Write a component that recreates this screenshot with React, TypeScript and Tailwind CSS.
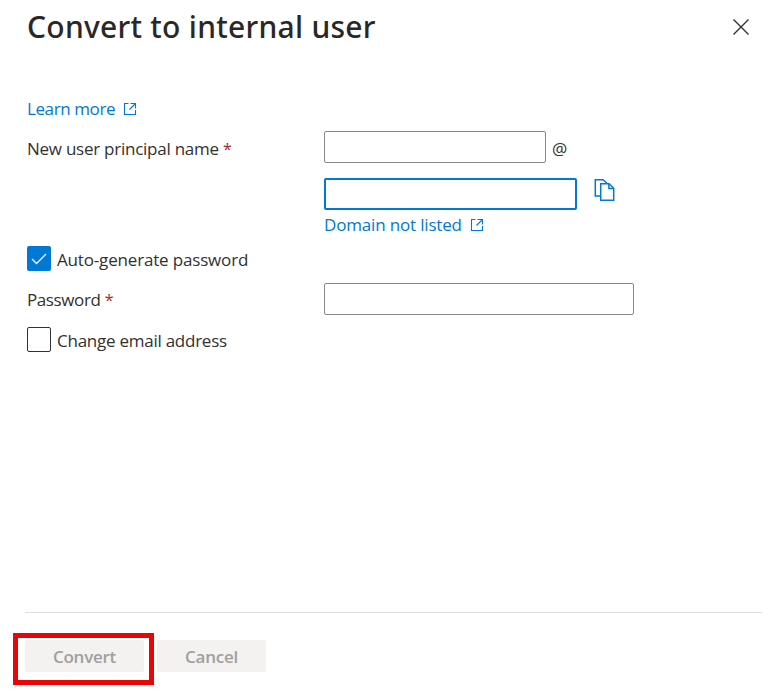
import React from 'react';

const OpenIcon = () => (
  <svg className="h-[14px] w-[14px] shrink-0" viewBox="0 0 14 14" fill="none" stroke="#0078d4" strokeWidth="1.1">
    <path d="M5.5 1.5H1.5V12.5H12.5V8M7.5 1.5H12.5V6.5M12.5 1.5L6.5 7.5" />
  </svg>
);

const CopyIcon = () => (
  <svg className="h-[24px] w-[22px]" viewBox="0 0 22 24" fill="none" stroke="#0078d4" strokeWidth="1.5">
    <path d="M6.5 18H1.3V1.7H9L13 5.2" />
    <path d="M6.7 5.7H15.1L19.7 10.3V22.2H6.7Z" />
    <path d="M14.9 5.7V10.4H19.7" />
  </svg>
);

export default function App() {
  return (
    <div className="flex h-[690px] w-[774px] flex-col overflow-hidden bg-white font-['Open_Sans','Noto_Sans',sans-serif] text-[17px] leading-6 tracking-[-0.17px] text-[#323130]">
      <header className="flex h-[54px] items-center justify-between pr-[25px] pl-[27px]">
        <h1 className="font-['Noto_Sans',sans-serif] text-[30px] leading-[54px] font-medium tracking-[0.27px] whitespace-nowrap text-[#292827]">Convert to internal user</h1>
        <button aria-label="Close">
          <svg className="h-4 w-4" viewBox="0 0 16 16" stroke="#323130" strokeWidth="1.4">
            <path d="M0.5 0.5L15.5 15.5M15.5 0.5L0.5 15.5" />
          </svg>
        </button>
      </header>

      <main className="flex-1 pt-[43px] pl-[27px]">
        <a className="flex h-6 items-center text-[#0078d4]">
          <span className="w-24 tracking-[-0.4px] whitespace-nowrap">Learn more</span>
          <OpenIcon />
        </a>

        <div className="mt-[10px] flex">
          <label className="mt-[6px] w-[297px] whitespace-nowrap">
            <span className="tracking-[-0.25px]">New user principal name</span> <span className="text-[16px] text-[#a4262c]">*</span>
          </label>
          <div>
            <div className="flex items-center gap-[6px]">
              <input className="h-8 w-[222px] rounded-[2px] border border-[#8a8886]" />
              <span className="pt-[3px]">@</span>
            </div>
            <div className="mt-[15px] flex gap-[17px]">
              <input className="h-8 w-[253px] rounded-[2px] border-2 border-[#0078d4]" />
              <CopyIcon />
            </div>
            <a className="mt-[3px] flex h-6 items-center text-[#0078d4]">
              <span className="w-[146px] whitespace-nowrap">Domain not listed</span>
              <OpenIcon />
            </a>
          </div>
        </div>

        <div className="mt-[9px] flex gap-[6px]">
          <span className="flex h-[25px] w-6 items-center justify-center rounded-[2px] bg-[#0078d4]">
            <svg className="h-4 w-4" viewBox="0 0 16 16" fill="none" stroke="white" strokeWidth="1.3">
              <path d="M1 8L5.5 12.5L15 3" />
            </svg>
          </span>
          <span className="mt-[2px] whitespace-nowrap">Auto-generate password</span>
        </div>

        <div className="mt-[11px] flex">
          <label className="mt-[5px] w-[297px]">
            <span className="tracking-[-0.4px]">Password</span> <span className="text-[16px] text-[#a4262c]">*</span>
          </label>
          <input className="h-8 w-[310px] rounded-[2px] border border-[#8a8886]" />
        </div>

        <div className="mt-[12px] flex gap-[6px]">
          <span className="h-[25px] w-6 rounded-[2px] border border-[#323130]" />
          <span className="mt-[2px] tracking-[-0.25px] whitespace-nowrap">Change email address</span>
        </div>
      </main>

      <footer className="ml-[25px] h-[78px] w-[737px] border-t border-[#e1dfdd] text-[17px] tracking-[-0.27px] text-[#a19f9d]">
        <div className="-ml-3 flex pt-5">
          <div className="h-[52px] w-[141px] border-[5px] border-[#e80606] pt-[2px] pl-[7px]">
            <button className="h-8 w-[119px] rounded-[2px] bg-[#f3f2f1] pt-[2px] font-semibold">Convert</button>
          </div>
          <button className="mt-[7px] ml-[3px] h-8 w-[109px] rounded-[2px] bg-[#f3f2f1] pt-[2px] font-semibold">Cancel</button>
        </div>
      </footer>
    </div>
  );
}
